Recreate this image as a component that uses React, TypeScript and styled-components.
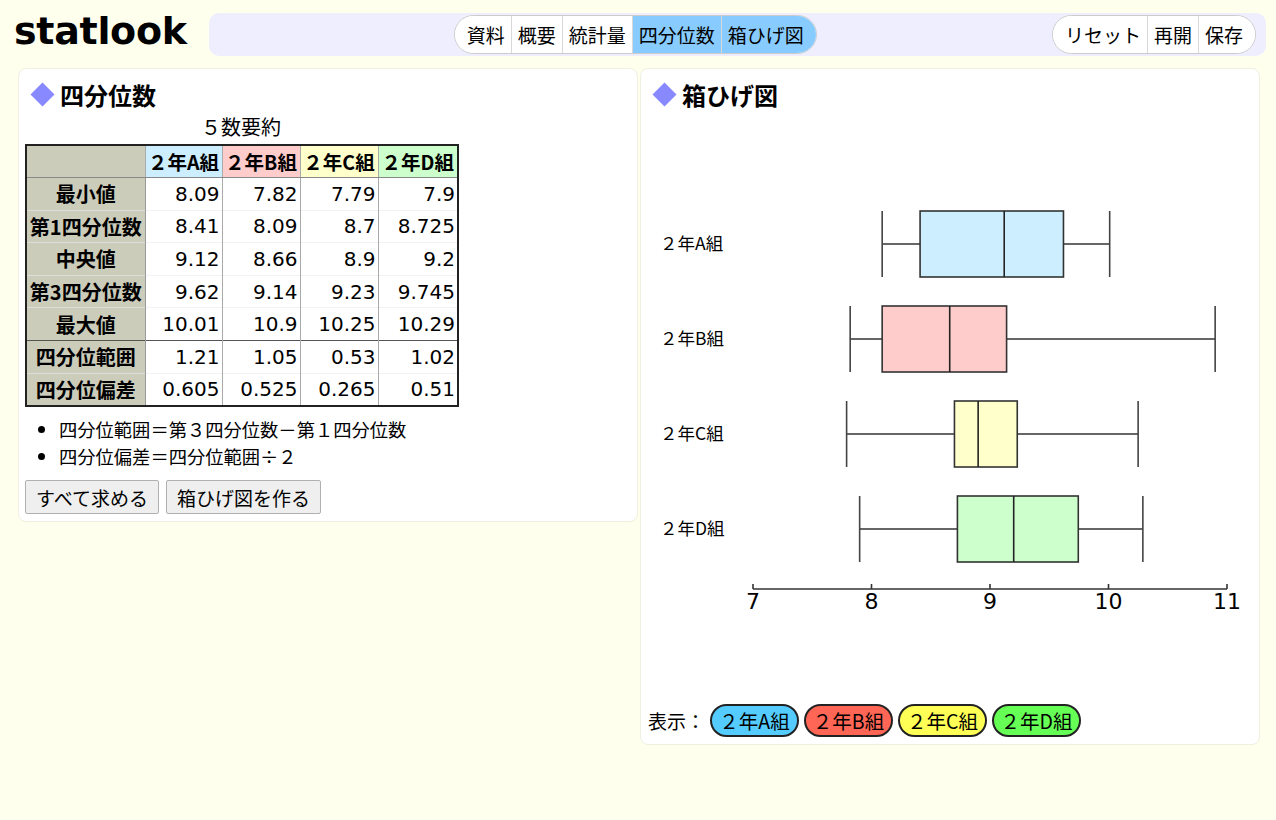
import React from 'react'
import styled, { createGlobalStyle } from 'styled-components'

const GlobalStyle = createGlobalStyle`
  body {
    margin: 0;
    background: #ffffee;
    font-family: "DejaVu Sans", "Noto Sans CJK JP", sans-serif;
    color: #000;
  }
`

interface Group {
  name: string
  head: string
  fill: string
  pill: string
  min: number
  q1: number
  med: number
  q3: number
  max: number
  range: string
  dev: string
}

const groups: Group[] = [
  { name: '２年A組', head: '#cceeff', fill: '#cceeff', pill: '#55ccff', min: 8.09, q1: 8.41, med: 9.12, q3: 9.62, max: 10.01, range: '1.21', dev: '0.605' },
  { name: '２年B組', head: '#ffcccc', fill: '#ffcccc', pill: '#ff6655', min: 7.82, q1: 8.09, med: 8.66, q3: 9.14, max: 10.9, range: '1.05', dev: '0.525' },
  { name: '２年C組', head: '#ffffcc', fill: '#ffffcc', pill: '#ffff55', min: 7.79, q1: 8.7, med: 8.9, q3: 9.23, max: 10.25, range: '0.53', dev: '0.265' },
  { name: '２年D組', head: '#ccffcc', fill: '#ccffcc', pill: '#66ff55', min: 7.9, q1: 8.725, med: 9.2, q3: 9.745, max: 10.29, range: '1.02', dev: '0.51' },
]

const statRows: { label: string; key: 'min' | 'q1' | 'med' | 'q3' | 'max' }[] = [
  { label: '最小値', key: 'min' },
  { label: '第1四分位数', key: 'q1' },
  { label: '中央値', key: 'med' },
  { label: '第3四分位数', key: 'q3' },
  { label: '最大値', key: 'max' },
]

const jp = '"Noto Sans CJK JP", sans-serif'
const latin = '"DejaVu Sans", "Noto Sans CJK JP", sans-serif'

const Header = styled.div`
  display: flex;
  align-items: center;
  padding: 13px 10px 0 14px;
  gap: 22px;
`

const Logo = styled.div`
  font-size: 38px;
  font-weight: bold;
  line-height: 43px;
  margin-top: -6px;
  letter-spacing: -0.3px;
`

const Nav = styled.div`
  flex: 1;
  height: 43px;
  background: #eeeeff;
  border-radius: 10px;
  display: flex;
  align-items: center;
`

const TabGroup = styled.div<{ $push?: boolean }>`
  display: flex;
  height: 39px;
  margin-left: ${(p) => (p.$push ? 'auto' : '245px')};
  margin-right: ${(p) => (p.$push ? '10px' : '0')};
  border: 1px solid #cccccc;
  border-radius: 20px;
  overflow: hidden;
  background: #fff;
  box-sizing: border-box;
`

const Tab = styled.div<{ $active?: boolean }>`
  display: flex;
  align-items: center;
  padding: 0 6px;
  font-family: ${jp};
  font-size: 19px;
  background: ${(p) => (p.$active ? '#88ccff' : '#fff')};
  border-left: 1px solid #d8d8d8;
  &:first-child {
    border-left: none;
    padding-left: 12px;
  }
  &:last-child {
    padding-right: 12px;
  }
`

const Main = styled.div`
  display: flex;
  align-items: flex-start;
  gap: 2px;
  padding: 12px 16px 0 18px;
`

const Panel = styled.div`
  width: 620px;
  box-sizing: border-box;
  background: #fff;
  border: 1px solid #f0f0e0;
  border-radius: 8px;
  padding: 8px 6px 7px 6px;
  display: flex;
  flex-direction: column;
`

const Title = styled.div`
  display: flex;
  align-items: center;
  gap: 6px;
  padding-left: 7px;
  font-family: ${jp};
  font-weight: bold;
  font-size: 24px;
  line-height: 35px;
`

const Diamond = styled.span`
  flex-shrink: 0;
  width: 17px;
  height: 17px;
  background: #8888ff;
  transform: rotate(45deg);
  margin: 0 3px 0 2px;
`

const Caption = styled.div`
  width: 432px;
  text-align: center;
  font-family: ${jp};
  font-size: 20px;
  line-height: 28px;
  margin-top: 1px;
  margin-bottom: 3px;
`

const Table = styled.table`
  border-collapse: collapse;
  border: 2px solid #222;
  width: 432px;
  font-family: ${latin};
  font-size: 20px;
  table-layout: fixed;
`

const HeadCell = styled.th<{ $bg: string }>`
  background: ${(p) => p.$bg};
  height: 31px;
  padding: 0;
  font-family: ${jp};
  font-size: 19.5px;
  font-weight: bold;
  border-left: 1px solid #aaa;
  border-bottom: 1px solid #888;
  white-space: nowrap;
`

const RowHead = styled.th<{ $split?: boolean }>`
  background: #ccccbb;
  height: 31.6px;
  padding: 0;
  font-family: ${jp};
  font-size: 20px;
  font-weight: bold;
  white-space: nowrap;
  border-right: 1px solid #999;
  border-top: ${(p) => (p.$split ? '1px solid #555' : '1px solid #dddddd')};
`

const Cell = styled.td<{ $split?: boolean }>`
  text-align: right;
  padding: 0 2px 0 0;
  border-left: 1px solid #aaa;
  border-top: ${(p) => (p.$split ? '1px solid #555' : '1px solid #f2f2f2')};
  white-space: nowrap;
`

const Notes = styled.ul`
  margin: 9px 0 0 0;
  padding-left: 34px;
  font-family: ${jp};
  font-size: 18.3px;
  line-height: 27px;
`

const Buttons = styled.div`
  display: flex;
  gap: 7px;
  margin-top: 10px;
`

const Button = styled.button`
  height: 34px;
  padding: 0 10px;
  font-family: ${jp};
  font-size: 19px;
  background: #efefef;
  border: 1px solid #b0b0b0;
  border-radius: 2px;
  color: #000;
`

const Chart = styled.svg`
  display: block;
  margin-top: 7px;
`

const Legend = styled.div`
  display: flex;
  align-items: center;
  gap: 5px;
  margin-top: 5px;
  padding-left: 1px;
  font-family: ${jp};
  font-size: 19px;
`

const Pill = styled.span<{ $bg: string }>`
  display: inline-flex;
  align-items: center;
  justify-content: center;
  width: 89px;
  height: 33px;
  box-sizing: border-box;
  background: ${(p) => p.$bg};
  border: 2px solid #222;
  border-radius: 17px;
  font-size: 19.5px;
`

// horizontal scale of the box plot, 7..11
const X0 = 112
const UNIT = 118.5
const xOf = (v: number) => X0 + (v - 7) * UNIT

const BoxRow: React.FC<{ g: Group; cy: number }> = ({ g, cy }) => {
  const top = cy - 33
  const h = 66
  return (
    <g>
      <text x={19} y={cy + 6} fontSize={17.5} fontFamily={jp}>
        {g.name}
      </text>
      <line x1={xOf(g.min)} y1={cy} x2={xOf(g.q1)} y2={cy} stroke="#333" strokeWidth={1.6} />
      <line x1={xOf(g.q3)} y1={cy} x2={xOf(g.max)} y2={cy} stroke="#333" strokeWidth={1.6} />
      <line x1={xOf(g.min)} y1={top} x2={xOf(g.min)} y2={top + h} stroke="#444" strokeWidth={1.6} />
      <line x1={xOf(g.max)} y1={top} x2={xOf(g.max)} y2={top + h} stroke="#444" strokeWidth={1.6} />
      <rect x={xOf(g.q1)} y={top} width={xOf(g.q3) - xOf(g.q1)} height={h} fill={g.fill} stroke="#333" strokeWidth={1.6} />
      <line x1={xOf(g.med)} y1={top} x2={xOf(g.med)} y2={top + h} stroke="#222" strokeWidth={1.6} />
    </g>
  )
}

const App: React.FC = () => {
  const axisY = 470
  return (
    <>
      <GlobalStyle />
      <Header>
        <Logo>statlook</Logo>
        <Nav>
          <TabGroup>
            <Tab>資料</Tab>
            <Tab>概要</Tab>
            <Tab>統計量</Tab>
            <Tab $active>四分位数</Tab>
            <Tab $active>箱ひげ図</Tab>
          </TabGroup>
          <TabGroup $push>
            <Tab>リセット</Tab>
            <Tab>再開</Tab>
            <Tab>保存</Tab>
          </TabGroup>
        </Nav>
      </Header>
      <Main>
        <Panel>
          <Title>
            <Diamond />
            四分位数
          </Title>
          <Caption>５数要約</Caption>
          <Table>
            <colgroup>
              <col style={{ width: 119 }} />
              <col style={{ width: 77 }} />
              <col style={{ width: 78 }} />
              <col style={{ width: 78 }} />
              <col style={{ width: 80 }} />
            </colgroup>
            <thead>
              <tr>
                <HeadCell $bg="#ccccbb" style={{ borderLeft: 'none' }} />
                {groups.map((g) => (
                  <HeadCell key={g.name} $bg={g.head}>
                    {g.name}
                  </HeadCell>
                ))}
              </tr>
            </thead>
            <tbody>
              {statRows.map((r) => (
                <tr key={r.key}>
                  <RowHead>{r.label}</RowHead>
                  {groups.map((g) => (
                    <Cell key={g.name}>{g[r.key]}</Cell>
                  ))}
                </tr>
              ))}
              <tr>
                <RowHead $split>四分位範囲</RowHead>
                {groups.map((g) => (
                  <Cell key={g.name} $split>
                    {g.range}
                  </Cell>
                ))}
              </tr>
              <tr>
                <RowHead>四分位偏差</RowHead>
                {groups.map((g) => (
                  <Cell key={g.name}>{g.dev}</Cell>
                ))}
              </tr>
            </tbody>
          </Table>
          <Notes>
            <li>四分位範囲＝第３四分位数－第１四分位数</li>
            <li>四分位偏差＝四分位範囲÷２</li>
          </Notes>
          <Buttons>
            <Button>すべて求める</Button>
            <Button>箱ひげ図を作る</Button>
          </Buttons>
        </Panel>
        <Panel>
          <Title>
            <Diamond />
            箱ひげ図
          </Title>
          <Chart width={606} height={580} viewBox="6 0 606 580">
            {groups.map((g, i) => (
              <BoxRow key={g.name} g={g} cy={125 + i * 95} />
            ))}
            <line x1={X0} y1={axisY} x2={xOf(11)} y2={axisY} stroke="#333" strokeWidth={1.6} />
            {[7, 8, 9, 10, 11].map((v) => (
              <g key={v}>
                <line x1={xOf(v)} y1={axisY - 5} x2={xOf(v)} y2={axisY} stroke="#333" strokeWidth={1.6} />
                <text x={xOf(v)} y={axisY + 20} fontSize={22} textAnchor="middle" fontFamily={latin}>
                  {v}
                </text>
              </g>
            ))}
          </Chart>
          <Legend>
            <span>表示：</span>
            {groups.map((g) => (
              <Pill key={g.name} $bg={g.pill}>
                {g.name}
              </Pill>
            ))}
          </Legend>
        </Panel>
      </Main>
    </>
  )
}

export default App
